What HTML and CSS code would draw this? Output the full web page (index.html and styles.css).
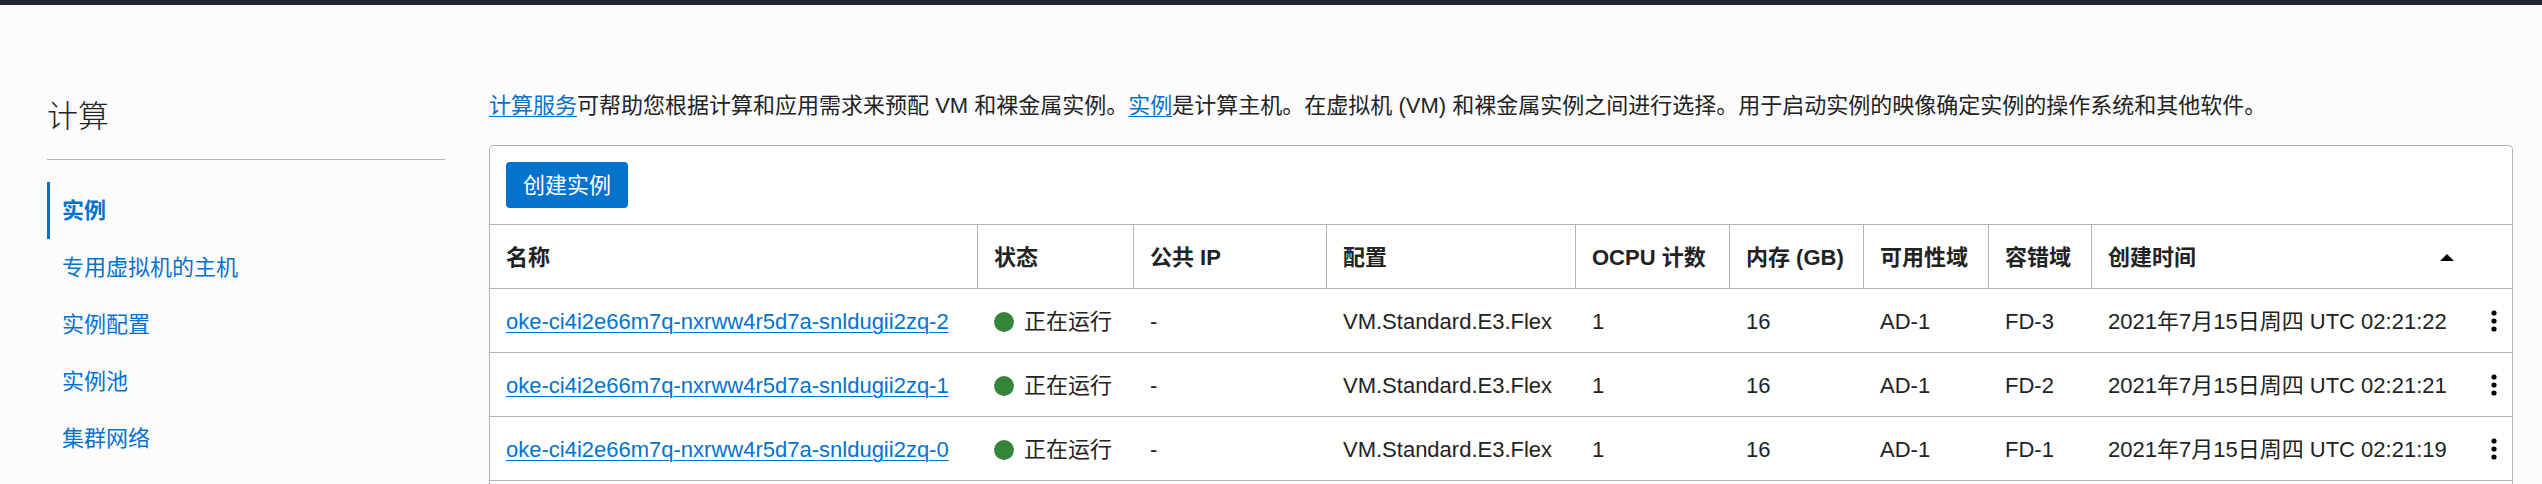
FILE: index.html
```html
<!DOCTYPE html>
<html lang="zh-CN">
<head>
<meta charset="utf-8">
<meta name="viewport" content="width=device-width, initial-scale=1">
<title>计算 - 实例</title>
<link rel="stylesheet" href="styles.css">
</head>
<body>
<header class="topbar"></header>
<div class="layout">
  <aside class="sidebar">
    <h1 class="sidebar-title">计算</h1>
    <nav class="nav">
      <a class="nav-link nav-link-active" href="#instances" aria-current="page">实例</a>
      <a class="nav-link" href="#dedicated-hosts">专用虚拟机的主机</a>
      <a class="nav-link" href="#configurations">实例配置</a>
      <a class="nav-link" href="#pools">实例池</a>
      <a class="nav-link" href="#cluster-networks">集群网络</a>
    </nav>
  </aside>
  <main class="content">
    <p class="intro"><a class="link" href="#compute">计算服务</a>可帮助您根据计算和应用需求来预配 VM 和裸金属实例。<a class="link" href="#instance">实例</a>是计算主机。在虚拟机 (VM) 和裸金属实例之间进行选择。用于启动实例的映像确定实例的操作系统和其他软件。</p>
    <section class="card">
      <div class="toolbar">
        <button class="button-primary" type="button">创建实例</button>
      </div>
      <table class="table">
        <colgroup>
          <col>
          <col class="col-status">
          <col class="col-ip">
          <col class="col-shape">
          <col class="col-ocpu">
          <col class="col-memory">
          <col class="col-ad">
          <col class="col-fd">
          <col class="col-created">
          <col class="col-menu">
        </colgroup>
        <thead>
          <tr>
            <th scope="col">名称</th>
            <th scope="col">状态</th>
            <th scope="col">公共 IP</th>
            <th scope="col">配置</th>
            <th scope="col">OCPU 计数</th>
            <th scope="col">内存 (GB)</th>
            <th scope="col">可用性域</th>
            <th scope="col">容错域</th>
            <th scope="col" class="head-created" aria-sort="ascending">
              <button class="sort" type="button">创建时间
                <svg class="sort-icon" viewBox="0 0 14 7" aria-hidden="true"><path d="M0 7 7 0l7 7z"/></svg>
              </button>
            </th>
            <td></td>
          </tr>
        </thead>
        <tbody>
          <tr>
            <td><a class="link" href="#node-2">oke-ci4i2e66m7q-nxrww4r5d7a-snldugii2zq-2</a></td>
            <td><span class="status"><span class="status-dot"></span>正在运行</span></td>
            <td>-</td>
            <td>VM.Standard.E3.Flex</td>
            <td>1</td>
            <td>16</td>
            <td>AD-1</td>
            <td>FD-3</td>
            <td>2021年7月15日周四 UTC 02:21:22</td>
            <td class="cell-menu"><button class="menu" type="button" aria-label="操作"><svg class="menu-icon" viewBox="0 0 6 22" aria-hidden="true"><circle cx="3" cy="3" r="2.6"/><circle cx="3" cy="11" r="2.6"/><circle cx="3" cy="19" r="2.6"/></svg></button></td>
          </tr>
          <tr>
            <td><a class="link" href="#node-1">oke-ci4i2e66m7q-nxrww4r5d7a-snldugii2zq-1</a></td>
            <td><span class="status"><span class="status-dot"></span>正在运行</span></td>
            <td>-</td>
            <td>VM.Standard.E3.Flex</td>
            <td>1</td>
            <td>16</td>
            <td>AD-1</td>
            <td>FD-2</td>
            <td>2021年7月15日周四 UTC 02:21:21</td>
            <td class="cell-menu"><button class="menu" type="button" aria-label="操作"><svg class="menu-icon" viewBox="0 0 6 22" aria-hidden="true"><circle cx="3" cy="3" r="2.6"/><circle cx="3" cy="11" r="2.6"/><circle cx="3" cy="19" r="2.6"/></svg></button></td>
          </tr>
          <tr>
            <td><a class="link" href="#node-0">oke-ci4i2e66m7q-nxrww4r5d7a-snldugii2zq-0</a></td>
            <td><span class="status"><span class="status-dot"></span>正在运行</span></td>
            <td>-</td>
            <td>VM.Standard.E3.Flex</td>
            <td>1</td>
            <td>16</td>
            <td>AD-1</td>
            <td>FD-1</td>
            <td>2021年7月15日周四 UTC 02:21:19</td>
            <td class="cell-menu"><button class="menu" type="button" aria-label="操作"><svg class="menu-icon" viewBox="0 0 6 22" aria-hidden="true"><circle cx="3" cy="3" r="2.6"/><circle cx="3" cy="11" r="2.6"/><circle cx="3" cy="19" r="2.6"/></svg></button></td>
          </tr>
        </tbody>
      </table>
      <footer class="card-footer"></footer>
    </section>
  </main>
</div>
</body>
</html>
```
FILE: styles.css
```css
:root {
  --blue: #0572ce;
  --line: #aeb5bf;
  --text: #222;
}

* {
  box-sizing: border-box;
}

body {
  display: flex;
  flex-direction: column;
  min-height: 100vh;
  margin: 0;
  background: #fcfcfc;
  color: var(--text);
  font: 22px/32px "Liberation Sans", "Noto Sans CJK SC", sans-serif;
}

button {
  border: 0;
  padding: 0;
  background: none;
  color: inherit;
  font: inherit;
  cursor: pointer;
}

.topbar {
  height: 5px;
  background: #1e2833;
}

.layout {
  display: grid;
  flex: 1;
  grid-template-columns: 398px minmax(0, 1fr);
  gap: 44px;
  padding: 85px 29px 0 47px;
}

.sidebar-title {
  margin: 0 0 22px;
  padding: 4px 0 20px;
  border-bottom: 1px solid var(--line);
  font-size: 31px;
  line-height: 45px;
  font-weight: 300;
}

.nav {
  display: flex;
  flex-direction: column;
}

.nav-link {
  padding: 13px 12px 12px;
  border-left: 3px solid transparent;
  color: var(--blue);
  text-decoration: none;
}

.nav-link-active {
  border-left-color: var(--blue);
  font-weight: 700;
}

.link {
  color: var(--blue);
  text-decoration: underline;
  text-decoration-thickness: 1px;
  text-underline-offset: 3px;
}

.content {
  display: flex;
  flex-direction: column;
}

.intro {
  margin: 0 0 23px;
}

.card {
  flex: 1;
  border: 1px solid var(--line);
  border-bottom: 0;
  border-radius: 5px 5px 0 0;
  background: #fff;
}

.toolbar {
  padding: 16px;
}

.button-primary {
  display: block;
  padding: 8px 17px 6px;
  border-radius: 4px;
  background: var(--blue);
  color: #fff;
}

.table {
  width: 100%;
  table-layout: fixed;
  border-collapse: separate;
  border-spacing: 0;
}

.col-status { width: 156px; }
.col-ip { width: 193px; }
.col-shape { width: 249px; }
.col-ocpu { width: 154px; }
.col-memory { width: 134px; }
.col-ad { width: 125px; }
.col-fd { width: 103px; }
.col-created { width: 384px; }
.col-menu { width: 36px; }

.table th,
.table td {
  height: 64px;
  padding: 2px 0 0 16px;
  border-top: 1px solid var(--line);
  text-align: left;
  white-space: nowrap;
}

.table th {
  border-right: 1px solid var(--line);
}

.table .head-created {
  border-right: 0;
  padding-right: 22px;
}

.sort {
  display: flex;
  align-items: center;
  justify-content: space-between;
  width: 100%;
}

.sort-icon {
  width: 14px;
  height: 7px;
  fill: #000;
}

.status {
  display: flex;
  align-items: center;
  gap: 10px;
}

.status-dot {
  width: 20px;
  height: 20px;
  border-radius: 50%;
  background: #348537;
}

.table .cell-menu {
  padding: 0;
}

.menu {
  display: flex;
  align-items: center;
  justify-content: center;
  width: 100%;
  height: 32px;
}

.menu-icon {
  width: 6px;
  height: 22px;
  fill: #000;
}

.card-footer {
  border-top: 1px solid var(--line);
}
```
